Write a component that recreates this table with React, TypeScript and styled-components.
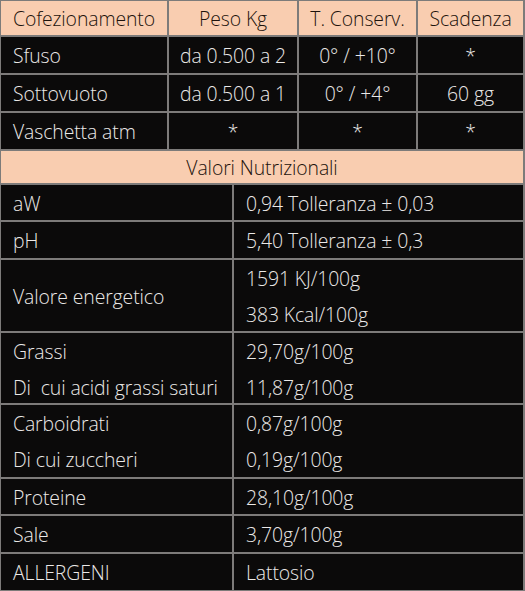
import React from "react";
import styled, { createGlobalStyle } from "styled-components";

const Global = createGlobalStyle`
  html, body { margin: 0; padding: 0; background: #0b0a0a; }
  body { font-family: "Open Sans", "Noto Sans", sans-serif; }
`;

const LINE = "#7d7b7a";

const Table = styled.div`
  width: 525px;
  height: 591px;
  box-sizing: border-box;
  border: 1px solid ${LINE};
  border-right-width: 2px;
  background: #0b0a0a;
  display: flex;
  flex-direction: column;
  font-weight: 300;
  font-size: 19.4px;
  letter-spacing: -0.1px;
  color: #ebe9e8;
`;

const TopGrid = styled.div`
  display: grid;
  grid-template-columns: 168px 130px 119px 1fr;
`;

const Cell = styled.div<{ $head?: boolean; $center?: boolean; $h?: number; $last?: boolean }>`
  height: ${(p) => p.$h ?? 37}px;
  box-sizing: border-box;
  display: flex;
  align-items: center;
  justify-content: ${(p) => (p.$center ? "center" : "flex-start")};
  padding-left: ${(p) => (p.$center ? 0 : 12)}px;
  background: ${(p) => (p.$head ? "#f9cdb0" : "#0b0a0a")};
  color: ${(p) => (p.$head ? "#1d130c" : "#ebe9e8")};
  border-right: ${(p) => (p.$last ? "none" : `2px solid ${LINE}`)};
  border-bottom: 2px solid ${LINE};
  white-space: nowrap;
`;

const Banner = styled.div`
  height: 37px;
  box-sizing: border-box;
  display: flex;
  align-items: center;
  justify-content: center;
  background: #f9cdb0;
  color: #1d130c;
  border-bottom: 2px solid ${LINE};
`;

const NutriRow = styled.div<{ $h: number; $last?: boolean }>`
  display: grid;
  grid-template-columns: 233px 1fr;
  height: ${(p) => p.$h}px;
  box-sizing: border-box;
  border-bottom: ${(p) => (p.$last ? "none" : `2px solid ${LINE}`)};
`;

const NutriCell = styled.div<{ $right?: boolean }>`
  display: flex;
  flex-direction: column;
  justify-content: center;
  padding-left: 12px;
  border-right: ${(p) => (p.$right ? "none" : `2px solid ${LINE}`)};
  white-space: pre;
`;

const Line = styled.div`
  height: 36px;
  display: flex;
  align-items: center;
`;

const top = [
  ["Sfuso", "da 0.500 a 2", "0° / +10°", "*"],
  ["Sottovuoto", "da 0.500 a 1", "0° / +4°", "60 gg"],
  ["Vaschetta atm", "*", "*", "*"],
];

const nutri: { left: string[]; right: string[]; h: number }[] = [
  { left: ["aW"], right: ["0,94 Tolleranza ± 0,03"], h: 37 },
  { left: ["pH"], right: ["5,40 Tolleranza ± 0,3"], h: 38 },
  { left: ["Valore energetico"], right: ["1591 KJ/100g", "383 Kcal/100g"], h: 73 },
  { left: ["Grassi", "Di  cui acidi grassi saturi"], right: ["29,70g/100g", "11,87g/100g"], h: 72 },
  { left: ["Carboidrati", "Di cui zuccheri"], right: ["0,87g/100g", "0,19g/100g"], h: 74 },
  { left: ["Proteine"], right: ["28,10g/100g"], h: 37 },
  { left: ["Sale"], right: ["3,70g/100g"], h: 38 },
  { left: ["ALLERGENI"], right: ["Lattosio"], h: 36 },
];

export default function App() {
  return (
    <>
      <Global />
      <Table>
        <TopGrid>
          <Cell $head $h={36}>Cofezionamento</Cell>
          <Cell $head $h={36} $center>Peso Kg</Cell>
          <Cell $head $h={36} $center>T. Conserv.</Cell>
          <Cell $head $h={36} $center $last>Scadenza</Cell>
          {top.map((r) =>
            r.map((v, i) => (
              <Cell key={r[0] + i} $center={i > 0} $last={i === 3} $h={38}>
                {v}
              </Cell>
            ))
          )}
        </TopGrid>
        <Banner>Valori Nutrizionali</Banner>
        {nutri.map((r, idx) => (
          <NutriRow key={r.left[0]} $h={r.h} $last={idx === nutri.length - 1}>
            <NutriCell>
              {r.left.map((t) => (
                <Line key={t}>{t}</Line>
              ))}
            </NutriCell>
            <NutriCell $right>
              {r.right.map((t) => (
                <Line key={t}>{t}</Line>
              ))}
            </NutriCell>
          </NutriRow>
        ))}
      </Table>
    </>
  );
}
